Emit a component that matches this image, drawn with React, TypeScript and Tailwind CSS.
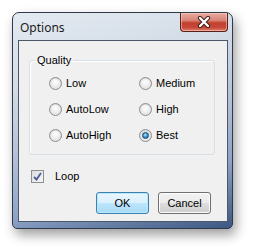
import React from 'react';

type RadioProps = { label: string; checked?: boolean };

function Radio({ label, checked }: RadioProps) {
  return (
    <div className="flex items-center h-[26px]">
      <span className="w-[13px] h-[13px] rounded-full border border-[#8c8e8f] bg-[radial-gradient(circle_at_50%_60%,#f4f4f4_20%,#dcdcdc_70%,#c4c4c4_100%)] flex items-center justify-center shrink-0">
        {checked ? (
          <span className="w-[7px] h-[7px] rounded-full border border-[#1d4a75] bg-[radial-gradient(circle_at_45%_40%,#b9ecff_0%,#3f9ad6_45%,#17507f_100%)]" />
        ) : (
          <span className="w-[9px] h-[9px] rounded-full bg-[radial-gradient(circle_at_50%_35%,#ffffff_0%,#eeeeee_55%,#d8d8d8_100%)]" />
        )}
      </span>
      <span className="ml-[4px] text-[11px] leading-[13px] text-black">{label}</span>
    </div>
  );
}

function WinButton({ label, focused }: { label: string; focused?: boolean }) {
  return (
    <button
      className={`w-[53px] h-[22px] rounded-[3px] border text-[11px] leading-[13px] text-black flex items-center justify-center ${
        focused
          ? 'border-[#3c7fb1] shadow-[inset_0_0_0_1px_#b6e9fb] bg-[linear-gradient(#eaf6fd_0%,#d9f0fc_50%,#bee6fd_51%,#a7d9f5_100%)]'
          : 'border-[#707070] shadow-[inset_0_0_0_1px_#fcfcfc] bg-[linear-gradient(#f2f2f2_0%,#ebebeb_50%,#dddddd_51%,#cfcfcf_100%)]'
      }`}
    >
      {label}
    </button>
  );
}

export default function App() {
  return (
    <div className="w-[254px] h-[250px] bg-white pt-[12px] pl-[12px] font-['Liberation_Sans',Arial,sans-serif] relative overflow-hidden">
      {/* window frame */}
      <div className="w-[221px] h-[217px] flex flex-col rounded-t-[7px] rounded-b-[5px] border border-[#2e3949] shadow-[3px_6px_12px_rgba(0,0,0,0.38)] bg-[linear-gradient(165deg,#e4eaf1_0%,#d3dce7_28%,#b0bed5_55%,#8ea3c7_75%,#3b5782_100%)]">
        {/* title bar */}
        <div className="h-[27px] flex justify-between items-start">
          <span className="pl-[7px] pt-[7px] text-[12px] leading-[15px] text-[#1b1b1b] font-['Noto_Sans','Open_Sans',sans-serif]">
            Options
          </span>
          <div className="mr-[4px] w-[48px] h-[19px] rounded-b-[4px] border border-t-0 border-[#5a2019] bg-[linear-gradient(#e8ab9e_0%,#d8867a_40%,#c2402d_55%,#c7473a_80%,#de8069_100%)] shadow-[inset_0_0_0_1px_rgba(255,220,210,0.5)] flex items-center justify-center">
            <svg width="14" height="12" viewBox="0 0 14 12">
              <path d="M3 2 L11 10 M11 2 L3 10" stroke="#3a1a16" strokeWidth="4.2" strokeLinecap="round" />
              <path d="M3 2 L11 10 M11 2 L3 10" stroke="#ffffff" strokeWidth="2.4" strokeLinecap="round" />
            </svg>
          </div>
        </div>
        {/* client area */}
        <div className="flex-1 ml-[5px] mr-[4px] mb-[6px] border border-[#4d5768] bg-[#f0f0f0] flex flex-col relative">
          <fieldset className="ml-[10px] mt-[13px] w-[186px] border border-[#d5dfe5] rounded-[3px] pb-[6px] shadow-[inset_1px_1px_0_#ffffff]">
            <legend className="ml-[5px] px-[2px] text-[11px] leading-[13px] text-black">Quality</legend>
            <div className="grid grid-cols-[90px_1fr] pl-[19px] pt-[3px]">
              <Radio label="Low" />
              <Radio label="Medium" />
              <Radio label="AutoLow" />
              <Radio label="High" />
              <Radio label="AutoHigh" />
              <Radio label="Best" checked />
            </div>
          </fieldset>
          <div className="flex items-center ml-[12px] mt-[14px] h-[14px]">
            <span className="w-[13px] h-[13px] border border-[#8e8f8f] bg-[linear-gradient(135deg,#dcdcdc,#f6f6f6)] flex items-center justify-center shrink-0">
              <svg width="9" height="9" viewBox="0 0 9 9">
                <path d="M1 5 L3.5 7.5 L8 1" fill="none" stroke="#4a5f97" strokeWidth="1.8" />
              </svg>
            </span>
            <span className="ml-[11px] text-[11px] leading-[13px] text-black">Loop</span>
          </div>
          <div className="flex justify-end gap-[9px] pr-[16px] mt-[9px]">
            <WinButton label="OK" focused />
            <WinButton label="Cancel" />
          </div>
        </div>
      </div>
    </div>
  );
}
